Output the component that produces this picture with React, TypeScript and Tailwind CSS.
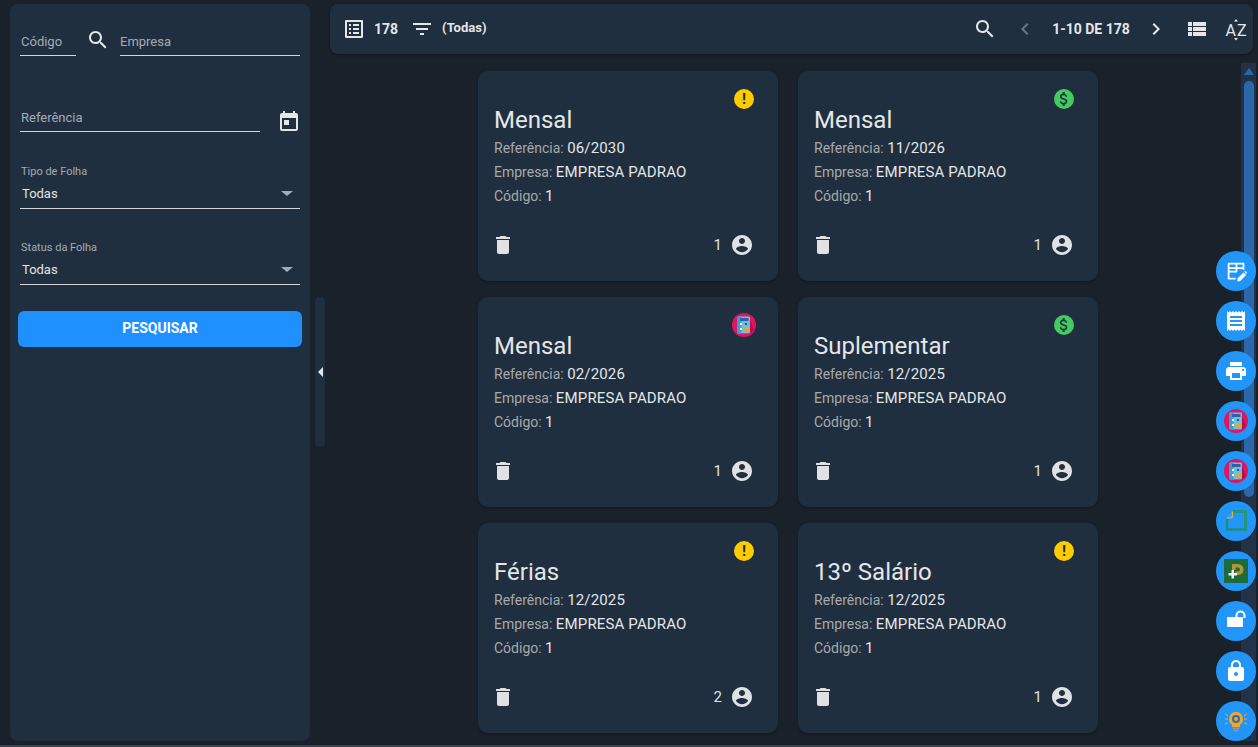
const P = {
  search: "M15.5 14h-.79l-.28-.27C15.41 12.59 16 11.11 16 9.5 16 5.91 13.09 3 9.5 3S3 5.91 3 9.5 5.91 16 9.5 16c1.61 0 3.09-.59 4.23-1.57l.27.28v.79l5 4.99L20.49 19l-4.99-5zm-6 0C7.01 14 5 11.99 5 9.5S7.01 5 9.5 5 14 7.01 14 9.5 11.99 14 9.5 14z",
  today: "M19 3h-1V1h-2v2H8V1H6v2H5c-1.11 0-1.99.9-1.99 2L3 19c0 1.1.89 2 2 2h14c1.1 0 2-.9 2-2V5c0-1.1-.9-2-2-2zm0 16H5V8h14v11zM7 10h5v5H7z",
  listAlt: "M19 5v14H5V5h14m1.1-2H3.9c-.5 0-.9.4-.9.9v16.2c0 .4.4.9.9.9h16.2c.4 0 .9-.5.9-.9V3.9c0-.5-.5-.9-.9-.9zM11 7h6v2h-6V7zm0 4h6v2h-6v-2zm0 4h6v2h-6zM7 7h2v2H7zm0 4h2v2H7zm0 4h2v2H7z",
  filter: "M10 18h4v-2h-4v2zM3 6v2h18V6H3zm3 7h12v-2H6v2z",
  left: "M15.41 7.41L14 6l-6 6 6 6 1.41-1.41L10.83 12z",
  right: "M10 6L8.59 7.41 13.17 12l-4.58 4.59L10 18l6-6z",
  viewList: "M3 14h4v-4H3v4zm0 5h4v-4H3v4zM3 9h4V5H3v4zm5 5h13v-4H8v4zm0 5h13v-4H8v4zM8 5v4h13V5H8z",
  trash: "M6 19c0 1.1.9 2 2 2h8c1.1 0 2-.9 2-2V7H6v12zM19 4h-3.5l-1-1h-5l-1 1H5v2h14V4z",
  account: "M12 2C6.48 2 2 6.48 2 12s4.48 10 10 10 10-4.48 10-10S17.52 2 12 2zm0 3c1.66 0 3 1.34 3 3s-1.34 3-3 3-3-1.34-3-3 1.34-3 3-3zm0 14.2c-2.5 0-4.71-1.28-6-3.22.03-1.99 4-3.08 6-3.08 1.99 0 5.97 1.09 6 3.08-1.29 1.94-3.5 3.22-6 3.22z",
  money: "M11.8 10.9c-2.27-.59-3-1.2-3-2.15 0-1.09 1.01-1.85 2.7-1.85 1.78 0 2.44.85 2.5 2.1h2.21c-.07-1.72-1.12-3.3-3.21-3.81V3h-3v2.16c-1.94.42-3.5 1.68-3.5 3.61 0 2.31 1.91 3.46 4.7 4.13 2.5.6 3 1.48 3 2.41 0 .69-.49 1.79-2.7 1.79-2.06 0-2.87-.92-2.98-2.1h-2.2c.12 2.19 1.76 3.42 3.68 3.83V21h3v-2.15c1.95-.37 3.5-1.5 3.5-3.55 0-2.84-2.43-3.81-4.7-4.4z",
  print: "M19 8H5c-1.66 0-3 1.34-3 3v6h4v4h12v-4h4v-6c0-1.66-1.34-3-3-3zm-3 11H8v-5h8v5zm3-7c-.55 0-1-.45-1-1s.45-1 1-1 1 .45 1 1-.45 1-1 1zm-1-9H6v4h12V3z",
  receipt: "M18 17H6v-2h12v2zm0-4H6v-2h12v2zm0-4H6V7h12v2zM3 22l1.5-1.5L6 22l1.5-1.5L9 22l1.5-1.5L12 22l1.5-1.5L15 22l1.5-1.5L18 22l1.5-1.5L21 22V2l-1.5 1.5L18 2l-1.5 1.5L15 2l-1.5 1.5L12 2l-1.5 1.5L9 2 7.5 3.5 6 2 4.5 3.5 3 2v20z",
  lock: "M18 8h-1V6c0-2.76-2.24-5-5-5S7 3.24 7 6v2H6c-1.1 0-2 .9-2 2v10c0 1.1.9 2 2 2h12c1.1 0 2-.9 2-2V10c0-1.1-.9-2-2-2zm-6 9c-1.1 0-2-.9-2-2s.9-2 2-2 2 .9 2 2-.9 2-2 2zm3.1-9H8.9V6c0-1.71 1.39-3.1 3.1-3.1 1.71 0 3.1 1.39 3.1 3.1v2z",
};

function Icon({ d, className = "" }: { d: string; className?: string }) {
  return (
    <svg viewBox="0 0 24 24" className={`w-6 h-6 shrink-0 fill-current ${className}`}>
      <path d={d} />
    </svg>
  );
}

function Calc() {
  return (
    <svg viewBox="0 0 24 24" className="w-6 h-6">
      <circle cx="12" cy="12" r="12" fill="#e0145f" />
      <path d="M7 21 L18 21 L22 17 L17 5z" fill="#b30f4d" />
      <rect x="5.5" y="3.5" width="12.5" height="17" rx="1" fill="#6cc0e2" />
      <rect x="5.5" y="3.5" width="4" height="17" fill="#3c9fd0" />
      <rect x="8" y="5" width="8.5" height="3" fill="#2e5fa8" />
      <rect x="8" y="10" width="2" height="2" fill="#dff2fb" />
      <rect x="13" y="10" width="2" height="2" fill="#35536f" />
      <rect x="8" y="15" width="2" height="2" fill="#ffffff" />
      <circle cx="14.5" cy="16.5" r="2.5" fill="#f0a030" />
    </svg>
  );
}

function Note() {
  return (
    <svg viewBox="0 0 24 24" className="w-6 h-6">
      <path d="M9 2.5 H21.5 V20.5 H3 V10" fill="none" stroke="#1a8f86" strokeWidth="2.5" />
      <path d="M9 2.5 H21.5 V20.5" fill="none" stroke="#2f9a58" strokeWidth="2" />
      <path d="M2 9.5 L9 2 V7 Q9 9.5 6.5 9.5z" fill="#d9b53c" />
      <path d="M2.5 8.5 L8 2.5 V6 Q8 8.5 5.5 8.5z" fill="#3aa0e0" />
    </svg>
  );
}

function GreenAdd() {
  return (
    <svg viewBox="0 0 24 24" className="w-6 h-6">
      <rect width="24" height="24" fill="#1d6b3a" />
      <path d="M8 5 H14 A5.5 5.5 0 0 1 14 16 H11.5 V12.5 H14 A2 2 0 0 0 14 8.5 H11.5 V11 H8z" fill="#b3953a" />
      <path d="M7.5 11 H10 V14 H13 V16.5 H10 V19.5 H7.5 V16.5 H4.5 V14 H7.5z" fill="#eef3ee" />
    </svg>
  );
}

function Bulb() {
  return (
    <svg viewBox="0 0 24 24" className="w-6 h-6">
      <path d="M12 3a7 7 0 0 0-4 12.7V18h8v-2.3A7 7 0 0 0 12 3z" fill="#f5a623" />
      <circle cx="12" cy="10" r="4" fill="#2c6fb0" />
      <circle cx="12" cy="10" r="2" fill="#f5a623" />
      <rect x="9" y="18.5" width="6" height="2" fill="#8a9aa8" />
      <rect x="10" y="21" width="4" height="1.5" fill="#8a9aa8" />
      <path d="M1 5l3 2M1 10h3M1 15l3-1.5M23 5l-3 2M23 10h-3M23 15l-3-1.5" stroke="#d9a84a" strokeWidth="1" fill="none" />
    </svg>
  );
}

function TableEdit() {
  return (
    <svg viewBox="0 0 24 24" className="w-[21px] h-[21px]">
      <path fill="#fff" fillRule="evenodd" d="M3 2h17a1 1 0 0 1 1 1v7h-2V9h-6v3l-2 2v-1H4v6h7v2H3a1 1 0 0 1-1-1V3a1 1 0 0 1 1-1zm1 2v3h7V4H4zm9 0v3h6V4h-6zM4 9v2h7V9H4z" />
      <path fill="#fff" d="M13 23v-3l7-7 3 3-7 7h-3zM21 12l1-1 2 2-1 2-2-3z" />
    </svg>
  );
}

function LockOpen() {
  return (
    <svg viewBox="0 0 24 24" className="w-6 h-6">
      <rect x="3" y="8" width="16" height="10" rx="1" fill="#fff" />
      <path fill="none" stroke="#fff" strokeWidth="2" d="M12.5 8V6.5a4 4 0 0 1 8 0V9" />
    </svg>
  );
}

function Field({ label, className = "" }: { label: string; className?: string }) {
  return (
    <div className={`h-[31px] border-b border-[#d5d8db] text-[13px] leading-[15px] text-[#a3abb3] pl-px pt-[9px] ${className}`}>
      {label}
    </div>
  );
}

function SelectField({ label }: { label: string }) {
  return (
    <div className="border-b border-[#d5d8db] h-[47px] pl-px">
      <div className="text-[11px] leading-[14px] pt-[3px] h-[17px] text-[#a3abb3]">{label}</div>
      <div className="flex items-center justify-between h-[29px] pl-px text-[13px] text-[#e2e4e6]">
        <span>Todas</span>
        <span className="w-0 h-0 mr-[7px] border-x-[6px] border-x-transparent border-t-[5px] border-t-[#a3abb3]" />
      </div>
    </div>
  );
}

type Status = "warn" | "money" | "calc";

function StatusIcon({ status }: { status: Status }) {
  if (status === "warn") {
    return (
      <div className="w-5 h-5 rounded-full bg-[#ffcc00] flex items-center justify-center text-[#1f2d3d] text-[15px] font-bold leading-none">
        !
      </div>
    );
  }
  if (status === "money") {
    return (
      <div className="w-5 h-5 rounded-full bg-[#45cc60] flex items-center justify-center text-[#1f3040]">
        <Icon d={P.money} className="!w-[18px] !h-[18px]" />
      </div>
    );
  }
  return <div className="-m-0.5"><Calc /></div>;
}

const cards: { title: string; ref: string; status: Status; users: number }[] = [
  { title: "Mensal", ref: "06/2030", status: "warn", users: 1 },
  { title: "Mensal", ref: "11/2026", status: "money", users: 1 },
  { title: "Mensal", ref: "02/2026", status: "calc", users: 1 },
  { title: "Suplementar", ref: "12/2025", status: "money", users: 1 },
  { title: "Férias", ref: "12/2025", status: "warn", users: 2 },
  { title: "13º Salário", ref: "12/2025", status: "warn", users: 1 },
];

function Card({ title, ref: refDate, status, users }: (typeof cards)[number]) {
  const value = "text-[15px] tracking-[0.15px] text-[#e4e6e8]";
  return (
    <div className="h-[210px] rounded-[10px] bg-[#202f3f] shadow-[0_1px_3px_rgba(0,0,0,0.35)] pl-4 pr-[16px] flex flex-col">
      <div className="flex justify-end h-[18px] pt-[18px] pr-[8px]">
        <StatusIcon status={status} />
      </div>
      <div className="text-[24px] leading-[28px] mt-[17px] text-[#e4e6e8]">{title}</div>
      <div className="text-[14px] leading-[24px] mt-[2px] text-[#a6a9ac]">
        <div>Referência: <span className={value}>{refDate}</span></div>
        <div>Empresa: <span className={value}>EMPRESA PADRAO</span></div>
        <div>Código: <span className={value}>1</span></div>
      </div>
      <div className="flex items-center justify-between mt-[25px] text-[#dfe1e3]">
        <Icon d={P.trash} className="-ml-[3px]" />
        <div className="flex items-center gap-[8px] pr-[8px]">
          <span className="text-[15px]">{users}</span>
          <Icon d={P.account} />
        </div>
      </div>
    </div>
  );
}

function Fab({ children }: { children: React.ReactNode }) {
  return (
    <div className="w-10 h-10 rounded-full bg-[#2196f8] flex items-center justify-center">{children}</div>
  );
}

export default function App() {
  return (
    <div className="relative h-[747px] w-[1258px] overflow-hidden bg-[#19222b] border-b-2 border-[#3b444e] font-['Roboto',sans-serif]">
      <div className="flex h-full">
        {/* Filtros */}
        <aside className="ml-[10px] mt-1 mb-[4px] w-[300px] rounded-lg bg-[#202f3f] px-[10px] shrink-0">
          <div className="flex items-end pt-[21px] gap-[10px]">
            <Field label="Código" className="w-[56px]" />
            <Icon d={P.search} className="text-[#e4e6e8] mb-[4px]" />
            <Field label="Empresa" className="flex-1 !pl-0" />
          </div>
          <div className="flex items-end mt-[45px] justify-between">
            <Field label="Referência" className="w-[240px]" />
            <Icon d={P.today} className="text-[#e4e6e8] -mb-[2px] mr-[-1px]" />
          </div>
          <div className="mt-[30px]"><SelectField label="Tipo de Folha" /></div>
          <div className="mt-[29px]"><SelectField label="Status da Folha" /></div>
          <button className="mt-[26px] -mx-[2px] w-[284px] h-9 pb-[2px] rounded-md bg-[#1e90ff] text-white text-[14px] font-bold">
            PESQUISAR
          </button>
        </aside>

        {/* Recolher */}
        <div className="w-[20px] shrink-0 flex items-start justify-center">
          <div className="mt-[297px] w-[10px] h-[150px] rounded-[5px] bg-[#202f3f] flex items-center justify-center">
            <span className="w-0 h-0 border-y-[5px] border-y-transparent border-r-[5px] border-r-[#e4e6e8]" />
          </div>
        </div>

        <main className="w-[923px] shrink-0">
          <header className="mt-1 h-[50px] rounded-lg bg-[#202f3f] shadow-[0_1px_3px_rgba(0,0,0,0.4)] flex items-center text-[#e4e6e8]">
            <Icon d={P.listAlt} className="ml-3" />
            <span className="ml-[8px] text-[14px] font-bold">178</span>
            <Icon d={P.filter} className="ml-[12px]" />
            <span className="ml-[8px] -mt-[2px] text-[13px] font-bold">(Todas)</span>
            <div className="ml-auto flex items-center">
              <Icon d={P.search} />
              <Icon d={P.left} className="ml-[16px] text-[#6d7680]" />
              <span className="ml-[14px] text-[14px] font-bold w-[80px] text-center whitespace-nowrap">1-10 DE 178</span>
              <Icon d={P.right} className="ml-[13px]" />
              <Icon d={P.viewList} className="ml-[17px]" />
              <svg viewBox="0 0 24 24" className="w-6 h-6 ml-[15px] mr-[5px] fill-current">
                <path d="M10 4.5l2-2.5 2 2.5zM10 21l2 2.5 2-2.5z" />
                <text x="1.5" y="19" fontSize="16" fontFamily="Roboto, sans-serif">A</text>
                <text x="13" y="19" fontSize="16" fontFamily="Roboto, sans-serif">Z</text>
              </svg>
            </div>
          </header>
          <div className="flex mt-[9px] h-[678px]">
            <div className="flex-1">
              <div className="grid grid-cols-[300px_300px] gap-x-5 gap-y-4 ml-[148px] mt-2">
                {cards.map((c, i) => (
                  <Card key={i} {...c} />
                ))}
              </div>
            </div>
            {/* Barra de rolagem */}
            <div className="w-[15px] -mr-[3px] bg-[#223248] flex flex-col items-center">
              <span className="mt-[5px] w-0 h-0 border-x-[5px] border-x-transparent border-b-[7px] border-b-[#2a68ab]" />
              <div className="mt-[6px] w-[10px] h-[416px] rounded-[5px] bg-[#2a68ab]" />
            </div>
          </div>
        </main>
      </div>

      {/* Ações */}
      <div className="absolute left-[1216px] top-[251px] flex flex-col gap-[10px]">
        <Fab><TableEdit /></Fab>
        <Fab><Icon d={P.receipt} className="text-white" /></Fab>
        <Fab><Icon d={P.print} className="text-white" /></Fab>
        <Fab><Calc /></Fab>
        <Fab><Calc /></Fab>
        <Fab><Note /></Fab>
        <Fab><GreenAdd /></Fab>
        <Fab><LockOpen /></Fab>
        <Fab><Icon d={P.lock} className="text-white" /></Fab>
        <Fab><Bulb /></Fab>
      </div>
    </div>
  );
}
